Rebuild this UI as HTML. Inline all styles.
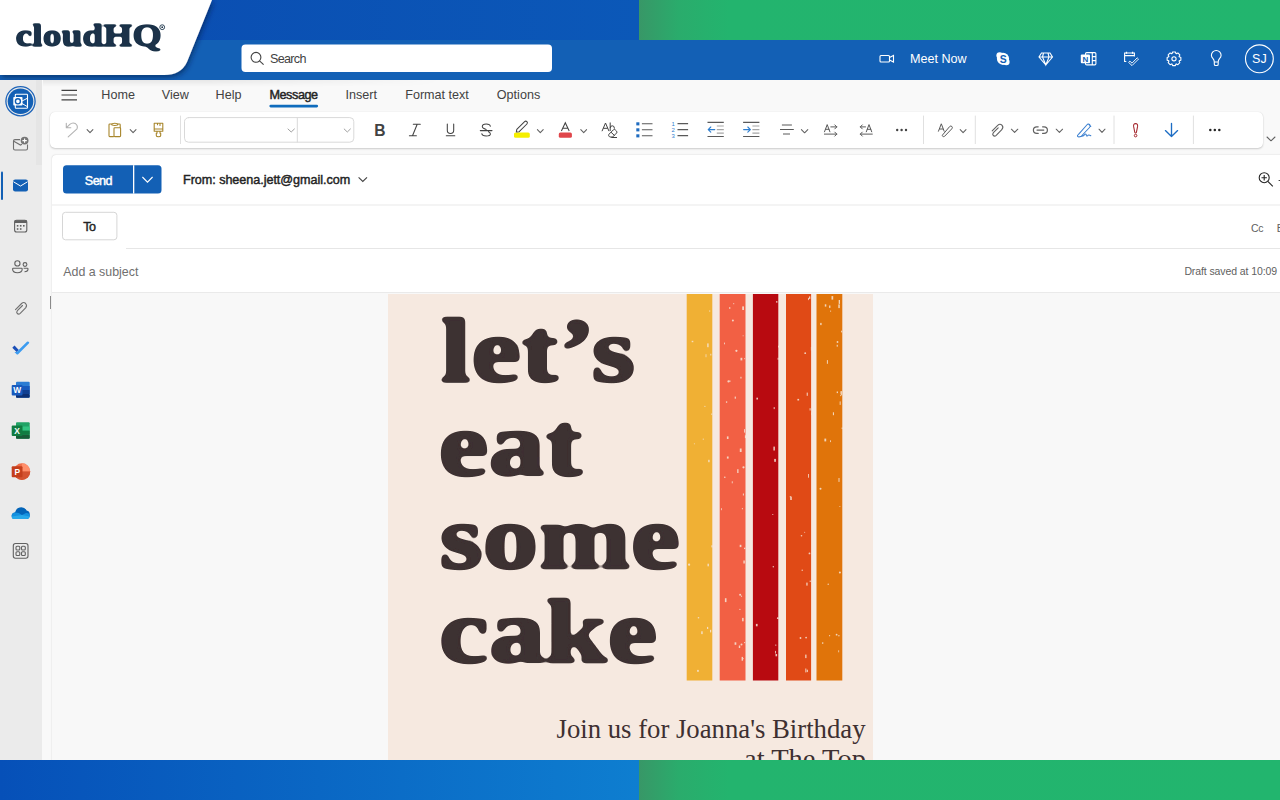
<!DOCTYPE html>
<html><head><meta charset="utf-8">
<style>
*{margin:0;padding:0;box-sizing:border-box}
html,body{width:1280px;height:800px;overflow:hidden;background:#f5f5f5;font-family:"Liberation Sans",sans-serif;color:#242424}
.abs{position:absolute}
#topstrip{left:0;top:0;width:1280px;height:40px}
#botstrip{left:0;top:760px;width:1280px;height:40px}
.blueL{position:absolute;left:0;top:0;width:639px;height:40px}
.greenR{position:absolute;left:639px;top:0;width:641px;height:40px;background:linear-gradient(90deg,#389767 0px,#2aac6c 40px,#23b46e 90px,#22b56e 641px)}
#header{left:0;top:40px;width:1280px;height:40px;background:#1360b5}
#search{left:241px;top:44px;width:311px;height:28px;background:#fff;border-radius:4px}
#search span{position:absolute;left:28px;top:7px;font-size:13px;color:#242424}
#logo{left:0;top:0;width:220px;height:80px}
#rail{left:0;top:80px;width:43px;height:680px;background:#ebebeb}
#main{left:42px;top:80px;width:1238px;height:680px;background:#f9f9f9}
.tab{position:absolute;top:87px;font-size:13px;color:#424242}
#toolbar{left:50px;top:112px;width:1213px;height:35.7px;background:#fff;border-radius:5px;box-shadow:0 1px 2px rgba(0,0,0,.18),0 0 1px rgba(0,0,0,.12)}
#card{left:52px;top:154.5px;width:1240px;height:620px;background:#fff;border-radius:4px;box-shadow:0 0 1.5px rgba(0,0,0,.22)}
#bodybg{left:52px;top:293.2px;width:1228px;height:467px;background:#f8f8f8}
#img{left:388px;top:294px}
</style></head>
<body>
<div id="topstrip" class="abs">
  <div class="blueL" style="background:linear-gradient(90deg,#0a4bb0,#0b58b8)"></div>
  <div class="greenR"></div>
</div>
<div id="header" class="abs"></div>

<svg class="abs" style="left:0;top:40px" width="1280" height="40" viewBox="0 40 1280 40">
  <g fill="none" stroke="#fff" stroke-width="1.1">
    <!-- video -->
    <rect x="880" y="55.5" width="9.5" height="6.5" rx="1"/>
    <path d="M889.5 57.5 L893.5 55.5 V62 L889.5 60"/>
    <!-- diamond -->
    <path d="M1041.5 53 H1050 L1052.5 57 L1045.8 65 L1039 57 Z M1039 57 H1052.5 M1043.5 53 L1042.5 57 L1045.8 65 L1049 57 L1048 53"/>
    <!-- onenote -->
    <rect x="1085.5" y="52.6" width="10.4" height="12.3" rx="1.2"/>
    <path d="M1092.3 52.6 V64.9 M1092.3 56.6 H1095.9 M1092.3 60.6 H1095.9"/>
    <!-- calendar check -->
    <path d="M1126.3 61.5 H1124.6 V53 H1134.4 V56.6 M1124.6 55.6 H1134.4"/>
    <path d="M1126.5 51.7 V53.8 M1132.6 51.7 V53.8" stroke-width="1.3"/>
    <path d="M1128.6 62.4 L1129.9 61.1 L1132 63.1 L1137.2 57.8 L1138.5 59.1 L1132 65.6 Z" stroke-width="0.9"/>
    <!-- gear -->
    <path d="M1180.86 57.41 L1180.86 60.19 L1179.24 60.77 L1179.10 61.11 L1179.83 62.67 L1177.87 64.63 L1176.31 63.90 L1175.97 64.04 L1175.39 65.66 L1172.61 65.66 L1172.03 64.04 L1171.69 63.90 L1170.13 64.63 L1168.17 62.67 L1168.90 61.11 L1168.76 60.77 L1167.14 60.19 L1167.14 57.41 L1168.76 56.83 L1168.90 56.49 L1168.17 54.93 L1170.13 52.97 L1171.69 53.70 L1172.03 53.56 L1172.61 51.94 L1175.39 51.94 L1175.97 53.56 L1176.31 53.70 L1177.87 52.97 L1179.83 54.93 L1179.10 56.49 L1179.24 56.83 Z" stroke-linejoin="round"/>
    <circle cx="1174" cy="58.8" r="2.1"/>
    <!-- bulb -->
    <path d="M1214.3 62 Q1214.3 60.2 1213 58.6 Q1211.4 57 1211.4 55.3 A4.85 4.85 0 0 1 1221.1 55.3 Q1221.1 57 1219.5 58.6 Q1218.2 60.2 1218.2 62 Z M1214.3 62 V64.2 Q1214.3 65.5 1215.6 65.5 H1216.9 Q1218.2 65.5 1218.2 64.2 V62"/>
    <!-- avatar -->
    <circle cx="1259.4" cy="58.8" r="13.9"/>
    <!-- search -->
  </g>
  <!-- skype -->
  <g fill="#fff"><circle cx="1003" cy="58.8" r="6.1"/><circle cx="999.7" cy="55.6" r="3.3"/><circle cx="1006.3" cy="62" r="3.3"/></g>
  <text x="1003.1" y="62.5" font-family="Liberation Sans" font-weight="bold" font-size="10.4" fill="#1360b5" text-anchor="middle">S</text>
  <rect x="1080.8" y="54.6" width="9.2" height="8.6" rx="1" fill="#fff"/>
  <text x="1085.4" y="62" font-family="Liberation Sans" font-weight="bold" font-size="8" fill="#1360b5" text-anchor="middle">N</text>
  <text x="1259.4" y="63.3" font-family="Liberation Sans" font-size="12.5" fill="#fff" text-anchor="middle">SJ</text>
  <text x="910" y="62.6" font-family="Liberation Sans" font-size="12.6" fill="#fff">Meet Now</text>
</svg>
<svg class="abs" style="left:241px;top:44px" width="311" height="28" viewBox="241 44 311 28">
  <rect x="241.5" y="44.5" width="310.5" height="27.5" rx="4" fill="#fff"/>
  <g fill="none" stroke="#424242" stroke-width="1.1"><circle cx="256" cy="57.3" r="4.9"/><path d="M259.5 60.8 L263.6 64.6"/></g>
  <text x="270" y="63.2" font-family="Liberation Sans" font-size="12.6" letter-spacing="-0.7" fill="#424242">Search</text>
</svg>

<svg id="logo" class="abs" width="220" height="80" viewBox="0 0 220 80">
  <defs><filter id="rnd2" x="-5%" y="-10%" width="110%" height="120%"><feGaussianBlur stdDeviation="0.9"/><feComponentTransfer><feFuncA type="linear" slope="3.2" intercept="-1.1"/></feComponentTransfer></filter><filter id="sh" x="-10%" y="-10%" width="130%" height="140%"><feDropShadow dx="1.5" dy="2.5" stdDeviation="2.5" flood-color="#001a4d" flood-opacity="0.6"/></filter></defs>
  <path d="M0 0 H212 L187 62 Q181 75 164 75 H0 Z" fill="#fff" filter="url(#sh)"/>
  <text filter="url(#rnd2)" transform="translate(15.6 46.2) scale(1 0.9)" x="0" y="0" font-family="Liberation Serif" font-weight="bold" font-size="35" fill="#1b3349" stroke="#1b3349" stroke-width="1.5" stroke-linejoin="round" textLength="146" lengthAdjust="spacingAndGlyphs">cloudHQ</text>
  <circle cx="162.2" cy="27.2" r="2.4" fill="none" stroke="#1b3349" stroke-width="0.9"/><circle cx="162.2" cy="27.2" r="0.9" fill="#1b3349"/>
</svg>
<div id="rail" class="abs"></div>
<div id="main" class="abs"></div>
<div class="abs" style="left:43px;top:80px;width:400px;height:7px;background:linear-gradient(180deg,rgba(0,0,0,.07),rgba(0,0,0,0));-webkit-mask-image:linear-gradient(90deg,#000 40%,transparent)"></div>
<svg class="abs" style="left:0;top:80px" width="50" height="680" viewBox="0 80 50 680">
  <rect x="36" y="80" width="6" height="85" fill="#e5e5e5"/>
  <!-- outlook logo -->
  <circle cx="20.5" cy="101.2" r="14.6" fill="none" stroke="#1d63b8" stroke-width="1.3"/>
  <circle cx="20.5" cy="101.2" r="12.8" fill="#1360b5"/>
  <rect x="15.3" y="94.3" width="12.2" height="14" rx="0.8" fill="none" stroke="#fff" stroke-width="1.1"/>
  <path d="M22 101 L27.3 98.3 M22 103.5 L27.3 106.6" stroke="#fff" stroke-width="1"/>
  <rect x="13.3" y="97" width="9.2" height="8.6" rx="0.8" fill="#fff"/>
  <ellipse cx="17.9" cy="101.3" rx="2.5" ry="2.6" fill="none" stroke="#1360b5" stroke-width="1.4"/>
  <!-- new mail -->
  <g fill="none" stroke="#707070" stroke-width="1.1">
    <path d="M20 139.6 H15 Q13.5 139.6 13.5 141.1 V148.5 Q13.5 150 15 150 H26 Q27.5 150 27.5 148.5 V144.5"/>
    <path d="M13.8 141.2 L20.5 145 L22 144.2"/>
  </g>
  <circle cx="24.6" cy="140.6" r="3.9" fill="#757575"/>
  <path d="M24.6 138.4 V142.8 M22.4 140.6 H26.8" stroke="#fff" stroke-width="1.1"/>
  <!-- active bar -->
  <rect x="1" y="171.5" width="2" height="28.5" rx="1" fill="#1360b5"/>
  <!-- mail -->
  <rect x="13" y="179.5" width="15" height="12" rx="2.2" fill="#1360b5"/>
  <path d="M13.5 181.8 L20.5 186 L27.5 181.8" fill="none" stroke="#fff" stroke-width="1"/>
  <!-- calendar -->
  <g fill="none" stroke="#616161" stroke-width="1.1">
    <rect x="14.6" y="220.2" width="12.2" height="11.8" rx="2"/>
  </g>
  <rect x="14.6" y="220.2" width="12.2" height="2.8" fill="#616161"/>
  <g fill="#616161"><rect x="16.8" y="225" width="1.6" height="1.6"/><rect x="19.9" y="225" width="1.6" height="1.6"/><rect x="23" y="225" width="1.6" height="1.6"/><rect x="16.8" y="228.2" width="1.6" height="1.6"/><rect x="19.9" y="228.2" width="1.6" height="1.6"/></g>
  <!-- people -->
  <g fill="none" stroke="#616161" stroke-width="1.1">
    <circle cx="17.4" cy="263.4" r="2.6"/>
    <path d="M13.3 268.3 H21.5 Q22.2 268.3 22.2 269 Q22.2 272.7 17.4 272.7 Q12.6 272.7 12.6 269 Q12.6 268.3 13.3 268.3 Z"/>
    <circle cx="25" cy="264.5" r="1.9"/>
    <path d="M23.6 268.3 H27.4 Q28 268.3 28 269 Q28 271.7 24.5 271.7"/>
  </g>
  <!-- paperclip -->
  <path d="M22.5 305.5 L17.4 310.6 Q16 312.2 17.3 313.5 Q18.6 314.8 20.2 313.3 L25.6 307.8 Q27.5 305.6 25.6 303.5 Q23.7 301.5 21.6 303.5 L15.5 309.6" fill="none" stroke="#707070" stroke-width="1.1" stroke-linecap="round"/>
  <!-- todo -->
  <path d="M12.3 347.8 L14.5 345.6 L18.8 349.9 L16.6 352.1 Z" fill="#1b4fb7"/>
  <path d="M16.6 352.1 L27 341.7 Q28 341 29 342 Q29.6 342.8 28.8 343.6 L18.4 354 Q17.5 355 16.6 354.2 L14.5 352.1 Z" fill="#3c9cf0"/>
  <!-- word -->
  <rect x="16" y="381.8" width="13.7" height="16" rx="1" fill="#2b7cd3"/>
  <rect x="16" y="386" width="13.7" height="4" fill="#185abd"/>
  <rect x="16" y="390" width="13.7" height="4" fill="#103f91"/>
  <rect x="16" y="394" width="13.7" height="3.8" rx="1" fill="#0c2f73"/>
  <rect x="11.7" y="385" width="10.8" height="10.5" rx="1" fill="#185abd"/>
  <text x="17.1" y="393.3" font-family="Liberation Sans" font-weight="bold" font-size="8.4" fill="#fff" text-anchor="middle">W</text>
  <!-- excel -->
  <rect x="16" y="422.3" width="13.7" height="16.4" rx="1" fill="#21a366"/>
  <rect x="22" y="426.5" width="7.7" height="4.2" fill="#33c481"/>
  <rect x="16" y="430.7" width="13.7" height="4" fill="#107c41"/>
  <rect x="16" y="434.7" width="13.7" height="4" rx="1" fill="#185c37"/>
  <rect x="11.7" y="425.6" width="10.8" height="10.5" rx="1" fill="#107c41"/>
  <text x="17.1" y="434.1" font-family="Liberation Sans" font-weight="bold" font-size="8.4" fill="#fff" text-anchor="middle">X</text>
  <!-- powerpoint -->
  <circle cx="21.9" cy="471.6" r="8.3" fill="#ed6c47"/>
  <path d="M21.9 463.3 A8.3 8.3 0 0 1 30.2 471.6 H21.9 Z" fill="#ff8f6b"/>
  <path d="M13.6 471.6 A8.3 8.3 0 0 0 21.9 479.9 A8.3 8.3 0 0 0 30.2 471.6 Z" fill="#d35230"/>
  <rect x="11.7" y="466.2" width="10.8" height="11" rx="1" fill="#c43e1c"/>
  <text x="17.2" y="474.8" font-family="Liberation Sans" font-weight="bold" font-size="8.4" fill="#fff" text-anchor="middle">P</text>
  <!-- onedrive -->
  <path d="M14.5 519 Q11.6 519 11.7 515.6 Q11.9 512.6 15 512.4 Q16.4 507.2 21.4 507.2 Q25 507.3 26.6 510.6 Q29.8 511 29.8 514.8 Q29.7 519 26.2 519 Z" fill="#0364b8"/>
  <path d="M14.5 519 Q11.6 519 11.7 515.6 Q11.9 513 14.6 512.6 Q18.8 512.4 22 515 L26 513 Q29.7 512.8 29.8 515.6 Q29.7 519 26.2 519 Z" fill="#1490df"/>
  <path d="M14.5 519 Q11.6 519 11.8 516.4 L22 515 L29.6 516.5 Q29.2 519 26.2 519 Z" fill="#28a8ea"/>
  <!-- apps -->
  <g fill="none" stroke="#616161" stroke-width="1.1">
    <rect x="13.3" y="543.5" width="14.7" height="14.7" rx="2.2"/>
    <rect x="16" y="546.2" width="3.8" height="3.8" rx="1"/>
    <rect x="21.5" y="546.2" width="3.8" height="3.8" rx="1"/>
    <rect x="16" y="551.7" width="3.8" height="3.8" rx="1"/>
    <rect x="21.5" y="551.7" width="3.8" height="3.8" rx="1"/>
  </g>
</svg>

<div id="toolbar" class="abs"></div>
<svg class="abs" style="left:0;top:80px" width="1280" height="75" viewBox="0 80 1280 75">
  <!-- hamburger -->
  <g stroke="#424242" stroke-width="1.2"><path d="M61.5 90.3 H77 M61.5 95 H77 M61.5 99.8 H77"/></g>
  <rect x="269.4" y="104.8" width="48.7" height="2.6" rx="1.3" fill="#0f6cbd"/>
  <g font-family="Liberation Sans" font-size="12.6" fill="#424242">
    <text x="101.3" y="98.9">Home</text>
    <text x="161.8" y="98.9">View</text>
    <text x="215.6" y="98.9">Help</text>
    <text x="269.4" y="98.9" fill="#242424" stroke="#242424" stroke-width="0.45" letter-spacing="-0.4">Message</text>
    <text x="345.4" y="98.9">Insert</text>
    <text x="405.2" y="98.9">Format text</text>
    <text x="496.8" y="98.9">Options</text>
  </g>
  <g fill="none" stroke-linecap="round" stroke-linejoin="round">
  <!-- separators -->
  <path d="M180.5 116 V143.6 M923.5 116 V143.6 M975.3 116 V143.6 M1114 116 V143.6 M1193.4 116 V143.6" stroke="#e0e0e0" stroke-width="1"/>
  <!-- undo -->
  <path d="M66.3 123.2 V127.8 H70.8 M66.5 127.6 L69.8 124.4 Q72.5 122 75.4 123.6 Q78.2 125.5 77 128.8 L68.2 136.8" stroke="#b3b3b3" stroke-width="1.1"/>
  <!-- chevrons -->
  <g stroke="#616161" stroke-width="1.05">
    <path d="M87.1 129.6 L90 132.6 L92.9 129.6"/>
    <path d="M130.2 129.6 L133.1 132.6 L136 129.6"/>
    <path d="M537.4 129.6 L540.3 132.6 L543.2 129.6"/>
    <path d="M580.8 129.6 L583.7 132.6 L586.6 129.6"/>
    <path d="M801.4 129.6 L804.6 132.8 L807.8 129.6"/>
    <path d="M960.2 129.6 L963.1 132.6 L966 129.6"/>
    <path d="M1011.4 129.2 L1014.6 132.4 L1017.8 129.2"/>
    <path d="M1056.2 129.2 L1059.4 132.4 L1062.6 129.2"/>
    <path d="M1099 129.2 L1102 132.4 L1105 129.2"/>
    <path d="M1267 137 L1271 140.8 L1275 137"/>
  </g>
  <g stroke="#a0a0a0" stroke-width="1">
    <path d="M288 129 L291.2 132 L294.4 129"/>
    <path d="M344.2 129 L347.3 132 L350.4 129"/>
  </g>
  <!-- paste -->
  <g stroke="#a8862c" stroke-width="1.1">
    <path d="M113.5 136.6 H109.8 Q109 136.6 109 135.8 V124.8 Q109 124 109.8 124 H111.5 M118 124 H119.4 Q120.2 124 120.2 124.8 V127.5"/>
    <path d="M111.7 124.6 Q111.7 123.2 114.8 123.2 Q117.8 123.2 117.8 124.6 Q117.8 125.5 114.8 125.5 Q111.7 125.5 111.7 124.6 Z"/>
    <rect x="114" y="127.7" width="6.6" height="8.9" rx="0.8"/>
  </g>
  <!-- format painter -->
  <g stroke="#a8862c" stroke-width="1.1">
    <path d="M154.2 123.2 H162.8 V131.2 H154.2 Z M154.2 129 H162.8 M160 123.2 V125.5 M157.5 123.2 V124.8 M157 131.2 V133.3 H156.3 V135.5 Q156.3 136.8 158.5 136.8 Q160.7 136.8 160.7 135.5 V133.3 H160 V131.2"/>
  </g>
  <!-- font boxes -->
  <rect x="184.5" y="117.6" width="169.3" height="24.6" rx="4" stroke="#d9d9d9" stroke-width="1"/>
  <path d="M297.3 118 V142" stroke="#d9d9d9" stroke-width="1"/>
  </g>
  <!-- B I U S -->
  <text x="374.3" y="135.6" font-family="Liberation Sans" font-weight="bold" font-size="15.6" fill="#424242">B</text>
  <g fill="none" stroke="#424242" stroke-width="1.05" stroke-linecap="round">
    <path d="M413.3 124.2 H420.3 M409.4 135.7 H416.4 M417.2 124.2 L412.5 135.7"/>
    <path d="M447.3 124 V130.2 Q447.3 133.4 450.5 133.4 Q453.7 133.4 453.7 130.2 V124 M446.3 135.7 H454.8"/>
    <path d="M480.3 130.6 H492 M490.3 126.2 Q490 124 486.2 124 Q482.3 124 482.3 126.6 Q482.3 128.6 486.2 129.4 M488.5 131.8 Q490.4 132.6 490.4 134 Q490.4 136 486.2 136 Q482.2 136 481.8 133.7"/>
  </g>
  <!-- highlighter -->
  <rect x="514" y="132.5" width="15.8" height="5.3" rx="1.6" fill="#f5ef00"/>
  <path d="M516.3 132 L516.8 129.3 L524.6 121.6 Q525.8 120.6 526.9 121.7 Q528 122.9 526.9 124 L519.2 131.7 Z" fill="none" stroke="#424242" stroke-width="1.05" stroke-linejoin="round"/>
  <!-- font colour -->
  <rect x="558.8" y="132.5" width="13.1" height="5.3" rx="1.6" fill="#e0464b"/>
  <path d="M561.4 131 L565.3 122.8 L569.2 131 M562.7 128.2 H567.9" fill="none" stroke="#424242" stroke-width="1.05"/>
  <!-- clear formatting -->
  <g fill="none" stroke="#424242" stroke-width="1" stroke-linejoin="round">
    <path d="M602 131.2 L605.5 123 L609 131.2 M603.3 128.3 H607.7 M610.2 122.5 V131 M610.2 128 Q610.2 125.8 612.3 125.8 Q614.4 125.8 614.4 128.4 V128.8"/>
    <path d="M609 134.2 L613.4 129.8 Q614.3 129 615.2 129.8 L616.6 131.2 Q617.4 132.1 616.6 133 L612.6 137 H609.8 L609 136.2 Q608.2 135.2 609 134.2 Z M611 132.2 L614.6 135.6 M611.3 137.5 H617"/>
  </g>
  <!-- bullets -->
  <g fill="#1f6cc0"><rect x="636.3" y="122.3" width="3.1" height="3.1"/><rect x="636.3" y="128.3" width="3.1" height="3.1"/><rect x="636.3" y="134.3" width="3.1" height="3.1"/></g>
  <path d="M641.9 123.8 H652.5 M641.9 129.8 H652.5 M641.9 135.8 H652.5" stroke="#595959" stroke-width="1.1"/>
  <!-- numbering -->
  <g font-family="Liberation Sans" font-size="6" fill="#2f7fd0"><text x="671.6" y="126.4">1</text><text x="671.6" y="132.4">2</text><text x="671.6" y="138.3">3</text></g>
  <path d="M677.5 123.6 H688.1 M677.5 129.6 H688.1 M677.5 135.6 H688.1" stroke="#595959" stroke-width="1.1"/>
  <!-- indents -->
  <path d="M707.5 122.4 H723.8 M707.5 136.5 H723.8 M743.1 122.4 H759.4 M743.1 136.5 H759.4" stroke="#595959" stroke-width="1.1"/>
  <path d="M716.8 126 H723.8 M716.8 129.6 H723.8 M716.8 133.1 H723.8 M752.4 126 H759.4 M752.4 129.6 H759.4 M752.4 133.1 H759.4" stroke="#a6a6a6" stroke-width="1.1"/>
  <path d="M708.2 129.6 H714.8 M710.8 127 L708.2 129.6 L710.8 132.2 M743.6 129.6 H750.4 M747.8 127 L750.4 129.6 L747.8 132.2" fill="none" stroke="#2f7fd0" stroke-width="1.1" stroke-linecap="round" stroke-linejoin="round"/>
  <!-- align -->
  <path d="M781.9 125 H791.9 M780 129.5 H793.8 M783 134 H790" stroke="#595959" stroke-width="1.1"/>
  <!-- ltr rtl -->
  <g fill="none" stroke="#595959" stroke-width="1" stroke-linejoin="round" stroke-linecap="round">
    <path d="M824.5 131.8 L827.2 124.6 L829.9 131.8 M825.5 129.3 H829 M830.8 126.9 H836.8 M834.8 124.9 L836.8 126.9 L834.8 128.9 M824.4 134.1 H836.8 M834.8 132.1 L836.8 134.1 L834.8 136.1"/>
    <path d="M866.3 131.8 L869 124.6 L871.7 131.8 M867.3 129.3 H870.8 M860.3 126.9 H865.5 M862.3 124.9 L860.3 126.9 L862.3 128.9 M860.3 134.1 H872.3 M862.3 132.1 L860.3 134.1 L862.3 136.1"/>
  </g>
  <!-- more -->
  <g fill="#424242"><circle cx="897.2" cy="130" r="1.2"/><circle cx="901.6" cy="130" r="1.2"/><circle cx="906" cy="130" r="1.2"/></g>
  <g fill="#242424"><circle cx="1210.3" cy="130" r="1.25"/><circle cx="1214.8" cy="130" r="1.25"/><circle cx="1219.3" cy="130" r="1.25"/></g>
  <!-- editor -->
  <g fill="none" stroke="#595959" stroke-width="1" stroke-linejoin="round">
    <path d="M938.3 131.6 L941.3 123.8 L944.3 131.6 M939.4 129 H943.2"/>
    <path d="M942.5 135 L949.6 126.6 Q950.8 125.4 951.9 126.5 Q952.9 127.6 951.8 128.8 L944.6 136.3 Q943.6 137 942.7 136.3 Q942 135.6 942.5 135 Z"/>
  </g>
  <!-- paperclip -->
  <path d="M998.2 127.8 L993.4 132.6 Q992 134.2 993.3 135.5 Q994.6 136.8 996.2 135.3 L1001.8 129.6 Q1003.9 127.4 1001.9 125.2 Q1000 123.2 997.7 125.3 L992.2 130.8" fill="none" stroke="#616161" stroke-width="1.1" stroke-linecap="round"/>
  <!-- link -->
  <path d="M1038.2 126.8 H1036.8 Q1033.4 126.8 1033.4 130.1 Q1033.4 133.4 1036.8 133.4 H1038.2 M1042.6 126.8 H1044 Q1047.4 126.8 1047.4 130.1 Q1047.4 133.4 1044 133.4 H1042.6 M1037 130.1 H1043.8" fill="none" stroke="#616161" stroke-width="1.2" stroke-linecap="round"/>
  <!-- signature -->
  <path d="M1078.5 134.4 L1086.8 125 Q1088.3 123.3 1089.7 124.6 Q1091 125.9 1089.5 127.5 L1081 136.5 Q1078.5 137.3 1077.6 136.4 Q1077 135.4 1078.5 134.4 Z M1089 124.6 L1090.8 126.4 M1081 136.5 Q1084 136 1085 134.2 Q1086 133.5 1086.4 135.4 Q1087 136.6 1088.2 135.2 Q1089 134.5 1090.8 135.8" fill="none" stroke="#3a7fd0" stroke-width="1.05" stroke-linejoin="round" stroke-linecap="round"/>
  <!-- importance -->
  <path d="M1135.6 123.6 Q1137.9 123.6 1137.6 126.4 L1136.4 132.3 Q1136.2 133 1135.6 133 Q1135 133 1134.8 132.3 L1133.6 126.4 Q1133.3 123.6 1135.6 123.6 Z" fill="none" stroke="#a4262c" stroke-width="1.05"/>
  <circle cx="1135.6" cy="135.6" r="1.3" fill="none" stroke="#a4262c" stroke-width="1"/>
  <!-- low importance -->
  <path d="M1171.5 123.5 V136.6 M1165.4 130.6 L1171.5 136.6 L1177.6 130.6" fill="none" stroke="#1d6dc4" stroke-width="1.35" stroke-linecap="round" stroke-linejoin="round"/>
</svg>

<div id="card" class="abs"></div>
<svg class="abs" style="left:0;top:154px" width="1280" height="140" viewBox="0 154 1280 140">
  <!-- dividers -->
  <rect x="52" y="204.3" width="1228" height="1.4" fill="#efefef"/>
  <rect x="126" y="248" width="1154" height="1" fill="#e6e6e6"/>
  <rect x="52" y="292" width="1228" height="1.2" fill="#eaeaea"/>
  <!-- send -->
  <rect x="63" y="165.2" width="98.5" height="28.4" rx="3.5" fill="#1360b5"/>
  <rect x="133" y="165.2" width="1.3" height="28.4" fill="#fff"/>
  <text x="84.8" y="184.5" font-family="Liberation Sans" font-size="12.6" fill="#fff" stroke="#fff" stroke-width="0.45" letter-spacing="-0.55">Send</text>
  <path d="M142.4 177 L147.5 182.2 L152.6 177" fill="none" stroke="#fff" stroke-width="1.1"/>
  <text x="183" y="184" font-family="Liberation Sans" font-size="12.6" fill="#242424" stroke="#242424" stroke-width="0.45" letter-spacing="-0.04">From: sheena.jett@gmail.com</text>
  <path d="M358.6 177.3 L362.8 181.4 L367 177.3" fill="none" stroke="#424242" stroke-width="1.1"/>
  <!-- zoom -->
  <g fill="none" stroke="#242424" stroke-width="1.1"><circle cx="1264.2" cy="177.7" r="5"/><path d="M1267.8 181.3 L1272.8 186.3 M1264.2 175 V180.4 M1261.5 177.7 H1266.9"/></g>
  <rect x="1278.6" y="180" width="1.4" height="1" fill="#424242"/>
  <!-- to -->
  <rect x="62.5" y="212.3" width="54.4" height="27.5" rx="3" fill="#fff" stroke="#d6d6d6" stroke-width="1"/>
  <text x="83.2" y="230.9" font-family="Liberation Sans" font-size="12.6" fill="#242424" stroke="#242424" stroke-width="0.45" letter-spacing="-0.5">To</text>
  <text x="1250.9" y="231.5" font-family="Liberation Sans" font-size="10.5" fill="#616161" letter-spacing="-0.3">Cc</text>
  <text x="1276.8" y="231.5" font-family="Liberation Sans" font-size="10.5" fill="#616161">B</text>
  <text x="63.3" y="276" font-family="Liberation Sans" font-size="12.4" fill="#707070">Add a subject</text>
  <text x="1184.4" y="274.5" font-family="Liberation Sans" font-size="10.5" fill="#616161" letter-spacing="-0.1">Draft saved at 10:09</text>
</svg>

<div id="bodybg" class="abs"></div>
<div class="abs" style="left:50px;top:296px;width:1px;height:13px;background:#8a8a8a"></div>
<svg id="img" class="abs" width="485" height="466" viewBox="388 294 485 466">
  <rect x="388" y="294" width="485" height="466" fill="#f6e9e0"/>
  <rect x="686.7" y="294" width="25.6" height="386.5" fill="#f0b034"/>
  <rect x="719.7" y="294" width="25.8" height="386.5" fill="#f26044"/>
  <rect x="752.9" y="294" width="25.4" height="386.5" fill="#b80a10"/>
  <rect x="786" y="294" width="25.1" height="386.5" fill="#e04a16"/>
  <rect x="816.5" y="294" width="25.8" height="386.5" fill="#e0740a"/>
  <g fill="#f6e6d8" opacity="0.85"><rect x="711.4" y="545.3" width="1.3" height="2.1"/><rect x="709.3" y="310.4" width="0.9" height="1.3"/><rect x="707.2" y="343.4" width="1.4" height="3.8"/><rect x="697.1" y="669.9" width="1.7" height="1.9"/><circle cx="711.6" cy="414.1" r="0.6"/><rect x="702.8" y="438.6" width="0.9" height="1.2"/><rect x="708.2" y="459.8" width="1.4" height="2.4"/><rect x="707.5" y="563.7" width="1.4" height="2.6"/><circle cx="704.9" cy="406.3" r="0.6"/><rect x="705.6" y="354.2" width="0.8" height="3.0"/><rect x="701.2" y="631.3" width="1.5" height="2.8"/><circle cx="698.5" cy="617.7" r="0.8"/><circle cx="689.1" cy="564.7" r="1.1"/><circle cx="694.4" cy="443.8" r="0.5"/><rect x="691.7" y="340.8" width="1.6" height="1.4"/><rect x="710.0" y="629.8" width="1.2" height="2.6"/><rect x="707.0" y="626.9" width="1.2" height="2.1"/><rect x="710.3" y="353.8" width="1.0" height="1.7"/><rect x="734.7" y="396.6" width="1.2" height="2.1"/><rect x="743.4" y="560.5" width="1.4" height="3.0"/><circle cx="740.1" cy="594.7" r="1.0"/><circle cx="743.1" cy="335.7" r="0.5"/><rect x="744.2" y="358.2" width="0.9" height="1.0"/><rect x="744.9" y="435.3" width="1.7" height="2.8"/><rect x="744.0" y="429.1" width="0.9" height="3.5"/><rect x="731.8" y="481.3" width="0.9" height="2.0"/><rect x="740.5" y="357.8" width="1.8" height="2.6"/><rect x="742.2" y="306.4" width="1.8" height="3.6"/><rect x="726.9" y="436.4" width="1.6" height="2.6"/><circle cx="728.5" cy="381.4" r="1.1"/><circle cx="739.9" cy="609.4" r="0.6"/><rect x="729.2" y="307.1" width="1.1" height="1.8"/><circle cx="743.5" cy="467.3" r="1.1"/><rect x="729.4" y="380.4" width="1.0" height="1.6"/><rect x="742.1" y="617.9" width="1.5" height="3.4"/><circle cx="741.5" cy="644.4" r="1.0"/><rect x="724.9" y="598.2" width="1.6" height="3.9"/><circle cx="743.1" cy="658.6" r="0.6"/><circle cx="744.6" cy="642.6" r="0.6"/><rect x="744.0" y="547.7" width="1.3" height="1.4"/><rect x="739.7" y="544.8" width="1.7" height="2.3"/><rect x="740.4" y="376.8" width="1.1" height="1.7"/><rect x="726.9" y="456.5" width="1.7" height="2.1"/><rect x="734.6" y="642.3" width="1.7" height="2.5"/><rect x="733.2" y="303.2" width="1.0" height="1.0"/><circle cx="724.8" cy="477.3" r="0.8"/><circle cx="742.4" cy="508.7" r="0.6"/><circle cx="726.6" cy="402.1" r="0.8"/><rect x="738.8" y="645.5" width="1.4" height="2.5"/><rect x="737.2" y="469.2" width="1.3" height="3.8"/><rect x="741.6" y="656.9" width="1.4" height="3.8"/><rect x="724.0" y="342.6" width="0.9" height="1.7"/><circle cx="741.5" cy="596.2" r="0.6"/><circle cx="736.4" cy="350.8" r="1.1"/><rect x="739.8" y="448.5" width="1.8" height="3.5"/><rect x="742.9" y="493.5" width="1.0" height="2.0"/><rect x="721.2" y="508.2" width="0.8" height="2.0"/><circle cx="732.9" cy="320.6" r="1.0"/><rect x="756.4" y="397.7" width="1.6" height="1.8"/><circle cx="775.8" cy="645.1" r="0.7"/><circle cx="772.8" cy="514.5" r="0.6"/><rect x="774.2" y="458.9" width="1.7" height="2.9"/><rect x="755.9" y="623.9" width="1.7" height="2.4"/><rect x="775.0" y="650.9" width="0.9" height="2.6"/><rect x="777.6" y="357.8" width="1.0" height="1.9"/><rect x="773.7" y="407.1" width="1.0" height="2.0"/><circle cx="776.8" cy="301.9" r="0.8"/><rect x="775.5" y="654.0" width="1.6" height="2.3"/><rect x="773.4" y="446.6" width="1.5" height="3.9"/><circle cx="773.3" cy="566.7" r="0.7"/><rect x="778.0" y="345.7" width="1.5" height="1.8"/><circle cx="777.8" cy="618.2" r="0.9"/><rect x="809.6" y="408.2" width="1.0" height="2.3"/><rect x="805.3" y="668.5" width="1.0" height="3.9"/><rect x="809.0" y="296.4" width="1.3" height="2.5"/><rect x="808.1" y="297.9" width="0.9" height="2.2"/><rect x="811.0" y="412.5" width="1.4" height="2.6"/><circle cx="802.2" cy="570.2" r="0.7"/><circle cx="805.2" cy="353.2" r="0.9"/><circle cx="806.1" cy="637.6" r="0.9"/><rect x="790.2" y="496.6" width="1.6" height="3.4"/><circle cx="800.5" cy="638.0" r="0.9"/><rect x="810.9" y="347.0" width="0.9" height="3.5"/><circle cx="801.5" cy="535.8" r="0.8"/><rect x="806.3" y="582.6" width="1.3" height="3.0"/><rect x="806.7" y="392.6" width="1.1" height="3.2"/><rect x="806.7" y="669.7" width="1.2" height="2.4"/><circle cx="804.7" cy="532.3" r="0.5"/><rect x="809.6" y="580.7" width="1.4" height="1.0"/><circle cx="809.5" cy="553.4" r="0.9"/><rect x="808.0" y="474.0" width="0.9" height="3.7"/><rect x="805.2" y="654.6" width="1.3" height="3.5"/><rect x="797.4" y="398.9" width="1.7" height="1.6"/><circle cx="790.3" cy="496.7" r="0.6"/><circle cx="829.6" cy="635.7" r="0.6"/><rect x="829.1" y="305.5" width="1.3" height="2.4"/><rect x="841.5" y="427.7" width="1.6" height="1.0"/><circle cx="837.5" cy="342.0" r="0.9"/><rect x="824.4" y="438.6" width="1.8" height="2.8"/><rect x="839.7" y="401.4" width="0.9" height="3.5"/><rect x="836.7" y="391.5" width="1.3" height="1.6"/><circle cx="836.6" cy="634.7" r="0.9"/><circle cx="839.9" cy="506.4" r="0.5"/><circle cx="828.2" cy="584.3" r="0.7"/><rect x="836.7" y="344.8" width="1.1" height="1.9"/><circle cx="840.7" cy="395.6" r="0.7"/><rect x="826.9" y="360.1" width="1.0" height="3.7"/><circle cx="822.7" cy="643.1" r="0.8"/><rect x="841.1" y="330.7" width="0.9" height="1.7"/><circle cx="838.9" cy="635.8" r="0.7"/><rect x="830.0" y="440.3" width="0.9" height="1.8"/><circle cx="820.5" cy="488.8" r="1.0"/><rect x="840.7" y="391.2" width="1.2" height="3.9"/><rect x="838.3" y="304.4" width="1.5" height="3.7"/><rect x="831.5" y="296.1" width="1.7" height="3.5"/><rect x="840.6" y="391.2" width="1.0" height="2.6"/><circle cx="839.9" cy="572.4" r="1.0"/><circle cx="830.6" cy="311.1" r="0.6"/><rect x="832.9" y="412.3" width="1.1" height="2.9"/><rect x="820.2" y="322.9" width="1.4" height="2.2"/><rect x="838.7" y="300.0" width="1.3" height="3.9"/><rect x="838.5" y="478.0" width="1.0" height="3.9"/><rect x="824.8" y="304.3" width="1.5" height="2.3"/><rect x="838.3" y="650.3" width="0.8" height="2.0"/></g>
  <defs><filter id="rnd" x="-5%" y="-5%" width="110%" height="110%"><feGaussianBlur stdDeviation="2.4"/><feComponentTransfer><feFuncA type="linear" slope="7" intercept="-3.2"/></feComponentTransfer></filter></defs>
  <g font-family="Liberation Serif" font-weight="bold" font-size="92" fill="#3e3031" stroke="#3e3031" stroke-width="3" stroke-linejoin="round" filter="url(#rnd)">
    <text x="440" y="380.5" textLength="195" lengthAdjust="spacingAndGlyphs">let’s</text>
    <text x="438.5" y="474.5" textLength="144" lengthAdjust="spacingAndGlyphs">eat</text>
    <text x="439.5" y="568" textLength="240.5" lengthAdjust="spacingAndGlyphs">some</text>
    <text x="439" y="661.8" textLength="218.5" lengthAdjust="spacingAndGlyphs">cake</text>
  </g>
  <g font-family="Liberation Serif" font-size="27.5" fill="#3e3031">
    <text x="556.5" y="738.3" textLength="309" lengthAdjust="spacingAndGlyphs">Join us for Joanna's Birthday</text>
    <text x="744" y="767.5" textLength="122" lengthAdjust="spacingAndGlyphs">at The Top</text>
  </g>
</svg>
<div id="botstrip" class="abs">
  <div class="blueL" style="background:linear-gradient(90deg,#0650b8,#0e7ed0)"></div>
  <div class="greenR"></div>
</div>
</body></html>
